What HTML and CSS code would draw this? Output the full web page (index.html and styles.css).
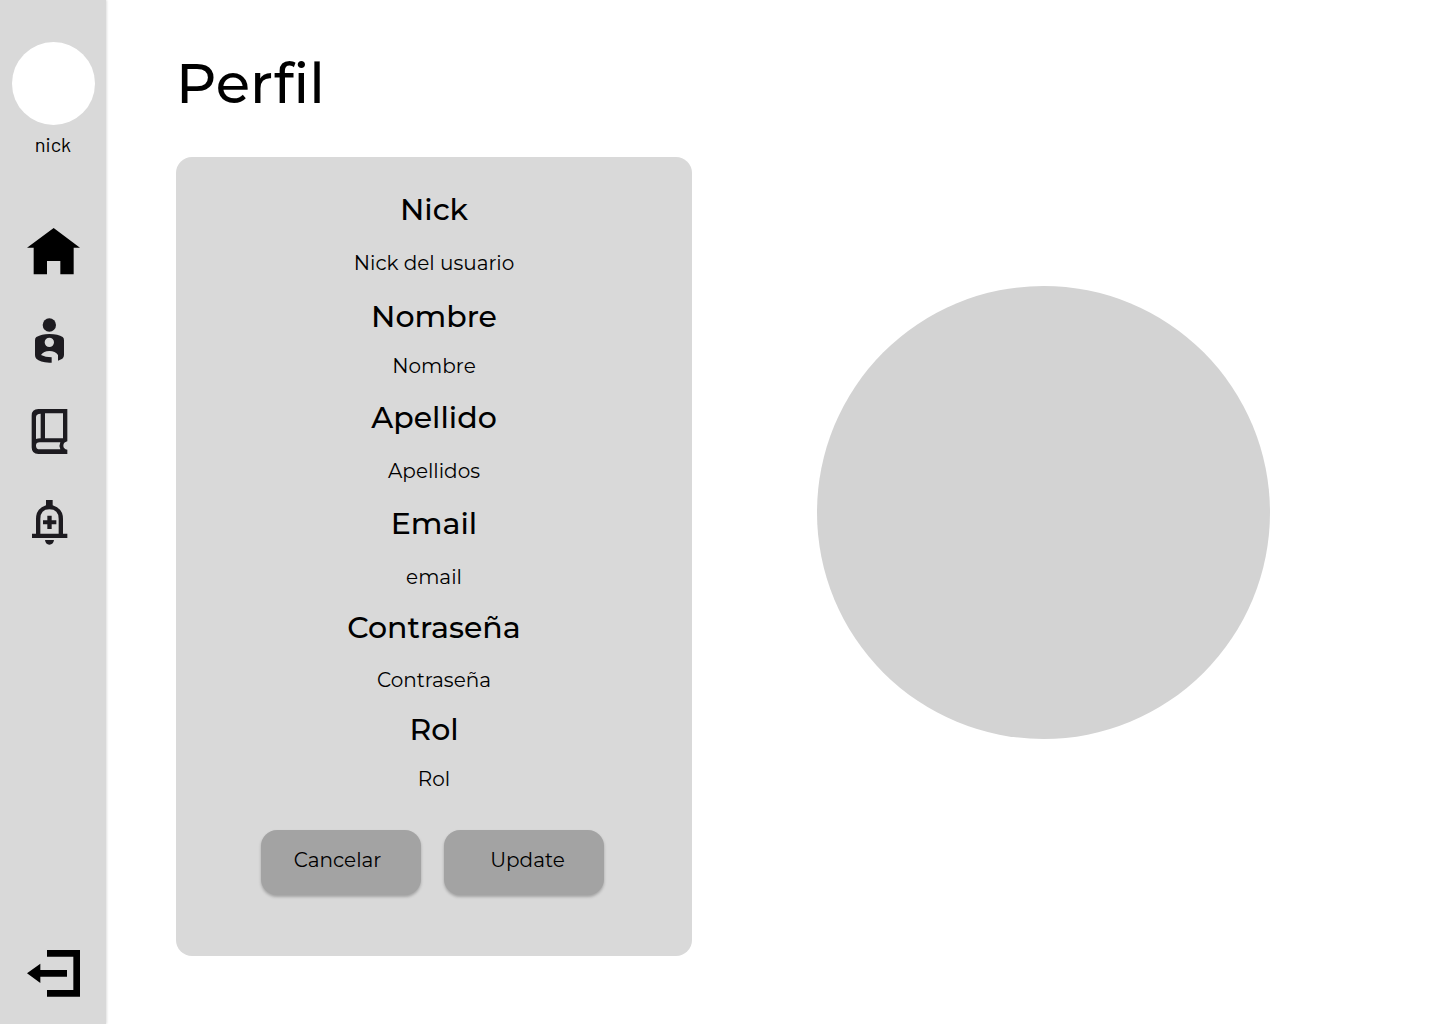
FILE: index.html
```html
<!DOCTYPE html>
<html lang="es">
<head>
<meta charset="utf-8">
<meta name="viewport" content="width=device-width, initial-scale=1">
<title>Perfil</title>
<link rel="stylesheet" href="styles.css">
</head>
<body>
<aside class="sidebar">
  <div class="avatar"></div>
  <span class="nick">nick</span>
  <nav class="nav">
    <a class="nav-link" href="#inicio" aria-label="Inicio">
      <svg class="icon" viewBox="0 0 159 159"><path d="M80 12 159 71H140V151H100V111H60V151H20V71H0Z"/></svg>
    </a>
    <a class="nav-link soft" href="#perfil" aria-label="Perfil">
      <svg class="icon" viewBox="0 0 159 159"><circle cx="67" cy="30" r="20"/><path fill-rule="evenodd" d="M67 57C85 57 98 61 107 66Q111 69 111 76V120Q111 127 106 131L93 137V120Q85 108 67 108Q50 108 42 120Q55 127 74 127V143H67C48 142 35 138 28 131Q24 128 24 120V76Q24 69 28 66C40 60 50 57 67 57ZM67 68A14 14 0 1 0 67 96A14 14 0 1 0 67 68Z"/></svg>
    </a>
    <a class="nav-link soft" href="#libros" aria-label="Libros">
      <svg class="icon" viewBox="0 0 159 159"><path fill-rule="evenodd" d="M34 9H121V106Q109 109 109 119Q109 128 121 131V144H34Q14 144 14 124V29Q14 9 34 9ZM41 23Q27 23 27 34V99Q32 97 41 97ZM54 22V97H108V22ZM38 109Q27 109 27 119Q27 130 38 130H100Q95 119 100 109Z"/></svg>
    </a>
    <a class="nav-link soft" href="#avisos" aria-label="Nuevo aviso">
      <svg class="icon" viewBox="0 0 159 159"><path fill-rule="evenodd" d="M57 9H77V25Q108 34 108 66V110H121V123H15V110H27V66Q27 34 57 25ZM40 110H95V66Q95 37 67 37Q40 37 40 66Z"/><path d="M61 56H74V70H88V82H74V96H61V82H48V70H61ZM54 129H81Q79 143 67 143Q56 143 54 129Z"/></svg>
    </a>
  </nav>
  <a class="nav-link logout" href="#salir" aria-label="Salir">
    <svg class="icon" viewBox="0 0 159 159"><path d="M0 79 40 50V69H120V89H40V108ZM60 9H159V149H60V129H139V29H60Z"/></svg>
  </a>
</aside>
<main class="main">
  <h1 class="title">Perfil</h1>
  <section class="card">
    <dl class="fields">
      <dt>Nick</dt><dd>Nick del usuario</dd>
      <dt>Nombre</dt><dd>Nombre</dd>
      <dt>Apellido</dt><dd>Apellidos</dd>
      <dt>Email</dt><dd>email</dd>
      <dt>Contraseña</dt><dd>Contraseña</dd>
      <dt>Rol</dt><dd>Rol</dd>
    </dl>
    <div class="actions">
      <button class="button cancel" type="button">Cancelar</button>
      <button class="button update" type="button">Update</button>
    </div>
  </section>
  <div class="photo"></div>
</main>
</body>
</html>
```
FILE: styles.css
```css
* {
  box-sizing: border-box;
}

body {
  margin: 0;
  display: flex;
  min-height: 100vh;
  background: #fff;
  color: #000;
  font-family: Montserrat, Inter, sans-serif;
}

.sidebar {
  flex: 0 0 106px;
  display: flex;
  flex-direction: column;
  align-items: center;
  padding: 42px 0 24px;
  background: #d9d9d9;
  box-shadow: 1px 0 2px rgba(0, 0, 0, 0.12);
}

.avatar {
  width: 83px;
  height: 83px;
  border-radius: 50%;
  background: #fff;
}

.nick {
  margin-top: 7px;
  font: 20px/24px Barlow, Roboto, sans-serif;
}

.nav {
  display: flex;
  flex-direction: column;
  gap: 38px;
  margin-top: 68px;
}

.nav-link {
  display: block;
  color: #000;
}

.soft {
  color: #1d1b20;
}

.icon {
  display: block;
  width: 53px;
  height: 53px;
  fill: currentColor;
}

.logout {
  margin-top: auto;
}

.main {
  flex: 1;
  display: grid;
  grid-template-columns: 516fr 703fr;
  grid-template-rows: auto 1fr;
  align-items: start;
  padding: 0 45px 0 70px;
}

.title {
  margin: 47px 0 38px;
  font-size: 56px;
  font-weight: 500;
  line-height: 72px;
}

.card {
  grid-column: 1;
  padding: 32px 24px 61px;
  border-radius: 16px;
  background: #d9d9d9;
}

.fields {
  display: grid;
  grid-template-rows: 54px 53px 50px 51px 54px 52px 54px 50px 53px 49px 50px 71px;
  margin: 0;
  text-align: center;
}

.fields dt {
  font-size: 30px;
  font-weight: 500;
  line-height: 42px;
}

.fields dd {
  margin: 0;
  font-size: 20px;
  line-height: 40px;
}

.actions {
  display: flex;
  justify-content: center;
  gap: 23px;
  padding-right: 4px;
}

.button {
  width: 160px;
  height: 65px;
  padding: 0 0 6px;
  border: 0;
  border-radius: 16px;
  background: #a3a3a3;
  box-shadow: 0 2px 3px rgba(0, 0, 0, 0.25);
  color: #000;
  font: inherit;
  font-size: 20px;
}

.cancel {
  padding-right: 6px;
}

.update {
  padding-left: 8px;
}

.photo {
  grid-column: 2;
  grid-row: 1 / 3;
  place-self: center;
  width: 453px;
  max-width: 100%;
  aspect-ratio: 1;
  border-radius: 50%;
  background: #d3d3d3;
}
```
